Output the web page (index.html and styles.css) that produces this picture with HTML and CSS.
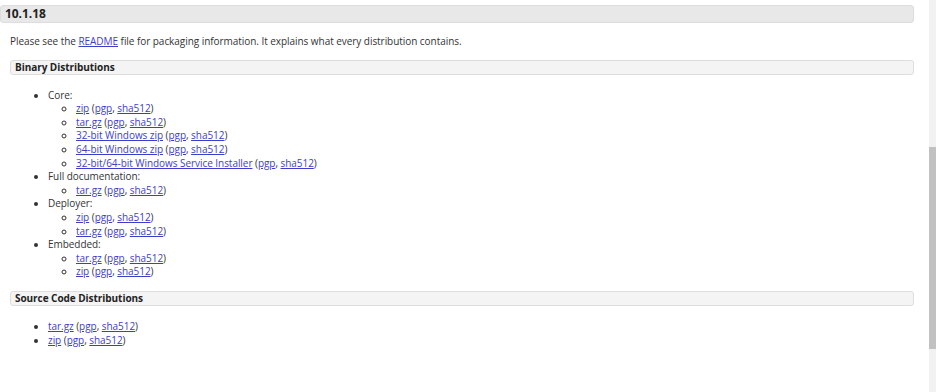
FILE: index.html
```html
<!DOCTYPE html>
<html>
<head>
<meta charset="utf-8">
<link rel="stylesheet" href="styles.css">
</head>
<body>
<div class="page">
  <h3 class="version">10.1.18</h3>
  <div class="section">
    <p class="intro">Please see the <a href="#">README</a> file for packaging information. It explains what every distribution contains.</p>
    <h4 class="subhead">Binary Distributions</h4>
    <ul class="list">
      <li>Core:
        <ul class="sublist">
          <li><a href="#">zip</a> (<a href="#">pgp</a>, <a href="#">sha512</a>)</li>
          <li><a href="#">tar.gz</a> (<a href="#">pgp</a>, <a href="#">sha512</a>)</li>
          <li><a href="#">32-bit Windows zip</a> (<a href="#">pgp</a>, <a href="#">sha512</a>)</li>
          <li><a href="#">64-bit Windows zip</a> (<a href="#">pgp</a>, <a href="#">sha512</a>)</li>
          <li><a href="#">32-bit/64-bit Windows Service Installer</a> (<a href="#">pgp</a>, <a href="#">sha512</a>)</li>
        </ul>
      </li>
      <li>Full documentation:
        <ul class="sublist">
          <li><a href="#">tar.gz</a> (<a href="#">pgp</a>, <a href="#">sha512</a>)</li>
        </ul>
      </li>
      <li>Deployer:
        <ul class="sublist">
          <li><a href="#">zip</a> (<a href="#">pgp</a>, <a href="#">sha512</a>)</li>
          <li><a href="#">tar.gz</a> (<a href="#">pgp</a>, <a href="#">sha512</a>)</li>
        </ul>
      </li>
      <li>Embedded:
        <ul class="sublist">
          <li><a href="#">tar.gz</a> (<a href="#">pgp</a>, <a href="#">sha512</a>)</li>
          <li><a href="#">zip</a> (<a href="#">pgp</a>, <a href="#">sha512</a>)</li>
        </ul>
      </li>
    </ul>
    <h4 class="subhead">Source Code Distributions</h4>
    <ul class="list">
      <li><a href="#">tar.gz</a> (<a href="#">pgp</a>, <a href="#">sha512</a>)</li>
      <li><a href="#">zip</a> (<a href="#">pgp</a>, <a href="#">sha512</a>)</li>
    </ul>
  </div>
</div>
<div class="scrollbar"><div class="thumb"></div></div>
</body>
</html>
```
FILE: styles.css
```css
html, body {
  margin: 0;
  padding: 0;
  background: #fff;
}
body {
  font-family: "Open Sans", "Liberation Sans", sans-serif;
  font-size: 10px;
  line-height: 13.6px;
  letter-spacing: -0.05px;
  color: #333;
  overflow: hidden;
}
.page {
  width: 914px;
  padding-top: 5px;
}
.version {
  margin: 0;
  height: 16px;
  line-height: 16px;
  padding: 0 4px;
  font-size: 12px;
  font-weight: bold;
  color: #222;
  background: #e8e8e8;
  border: 1px solid #dddddd;
  border-radius: 3px;
}
.section {
  padding-left: 10px;
}
.intro {
  margin: 12px 0 11px 0;
}
a {
  color: #3d3dcc;
  text-decoration: underline;
}
.subhead {
  margin: 0;
  height: 13px;
  line-height: 13px;
  padding: 0 4px;
  font-size: 10px;
  font-weight: bold;
  color: #222;
  background: #f4f4f4;
  border: 1px solid #dddddd;
  border-radius: 3px;
}
.list {
  margin: 14px 0 12px 0;
  padding-left: 38px;
  list-style: disc;
}
.sublist {
  margin: 0;
  padding-left: 28px;
  list-style: circle;
}
.scrollbar {
  position: fixed;
  top: 0;
  right: 0;
  width: 7px;
  height: 392px;
  background: #f1f1f1;
}
.thumb {
  position: absolute;
  top: 147px;
  left: 0;
  width: 7px;
  height: 202px;
  background: #c1c1c1;
}
```
